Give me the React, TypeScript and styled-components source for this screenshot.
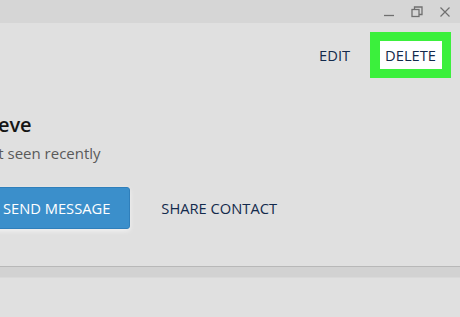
import React from "react";
import styled, { createGlobalStyle } from "styled-components";

const GlobalStyle = createGlobalStyle`
  html, body {
    margin: 0;
    padding: 0;
    background: #e0e0e0;
  }
  body {
    width: 460px;
    height: 317px;
    overflow: hidden;
    font-family: "Open Sans", "Liberation Sans", sans-serif;
  }
`;

const Window = styled.div`
  width: 460px;
  height: 317px;
  display: flex;
  flex-direction: column;
  background: #e0e0e0;
  overflow: hidden;
`;

const TitleBar = styled.div`
  height: 23px;
  flex-shrink: 0;
  background: #d6d6d6;
  display: flex;
  justify-content: flex-end;
  align-items: center;
  gap: 16px;
  padding-right: 9px;
`;

const WinButton = styled.div`
  width: 12px;
  height: 12px;
  display: flex;
  align-items: center;
  justify-content: center;
`;

const Header = styled.div`
  display: flex;
  justify-content: flex-end;
  align-items: center;
  gap: 20px;
  padding: 9px 9px 0 0;
`;

const TextAction = styled.span`
  font-size: 14.7px;
  color: #132a4c;
  text-transform: uppercase;
`;

const Highlight = styled.div`
  border: 9px solid #3bf03c;
  border-left-width: 10px;
  display: flex;
`;

const DeleteButton = styled.span`
  background: #fff;
  color: #132a4c;
  font-size: 14.7px;
  line-height: 28px;
  padding: 0 6px 0 5px;
`;

const Profile = styled.div`
  margin: 35px 0 0 -21px;
  display: flex;
  flex-direction: column;
`;

const Name = styled.div`
  font-size: 20px;
  font-weight: 600;
  color: #151515;
  line-height: 24px;
`;

const Status = styled.div`
  font-size: 15px;
  color: #5a5a5a;
  line-height: 20px;
  margin-top: 6px;
`;

const Actions = styled.div`
  display: flex;
  align-items: center;
  gap: 11px;
  margin-top: 24px;
`;

const PrimaryButton = styled.div`
  height: 40px;
  display: flex;
  align-items: center;
  padding: 0 19px 0 23px;
  background: #3b8fcb;
  border: 1px solid #2f7fbb;
  border-radius: 3px;
  box-shadow: 0 2px 5px rgba(255, 255, 255, 0.6);
  color: #fff;
  font-size: 14.7px;
`;

const FlatButton = styled.div`
  padding: 0 20px;
  color: #132a4c;
  font-size: 14.7px;
`;

const Divider = styled.div`
  margin-top: 37px;
  height: 10px;
  background: #d2d2d2;
  border-top: 1px solid #b8b8b8;
  border-bottom: 1px solid #d9d9d9;
`;

export default function App() {
  return (
    <Window>
      <GlobalStyle />
      <TitleBar>
        <WinButton>
          <svg width="12" height="12" viewBox="0 0 12 12">
            <path d="M1 9.5h10" stroke="#707070" strokeWidth="1.3" />
          </svg>
        </WinButton>
        <WinButton>
          <svg width="12" height="12" viewBox="0 0 12 12">
            <rect x="1" y="3.5" width="7" height="7" fill="none" stroke="#707070" strokeWidth="1.3" />
            <path d="M3.5 3.5V1h7.5v7.5H8" fill="none" stroke="#707070" strokeWidth="1.3" />
          </svg>
        </WinButton>
        <WinButton>
          <svg width="12" height="12" viewBox="0 0 12 12">
            <path d="M1.5 1.5l9 9M10.5 1.5l-9 9" stroke="#707070" strokeWidth="1.2" />
          </svg>
        </WinButton>
      </TitleBar>
      <Header>
        <TextAction>Edit</TextAction>
        <Highlight>
          <DeleteButton>DELETE</DeleteButton>
        </Highlight>
      </Header>
      <Profile>
        <Name>Steve</Name>
        <Status>last seen recently</Status>
        <Actions>
          <PrimaryButton>SEND MESSAGE</PrimaryButton>
          <FlatButton>SHARE CONTACT</FlatButton>
        </Actions>
      </Profile>
      <Divider />
    </Window>
  );
}
